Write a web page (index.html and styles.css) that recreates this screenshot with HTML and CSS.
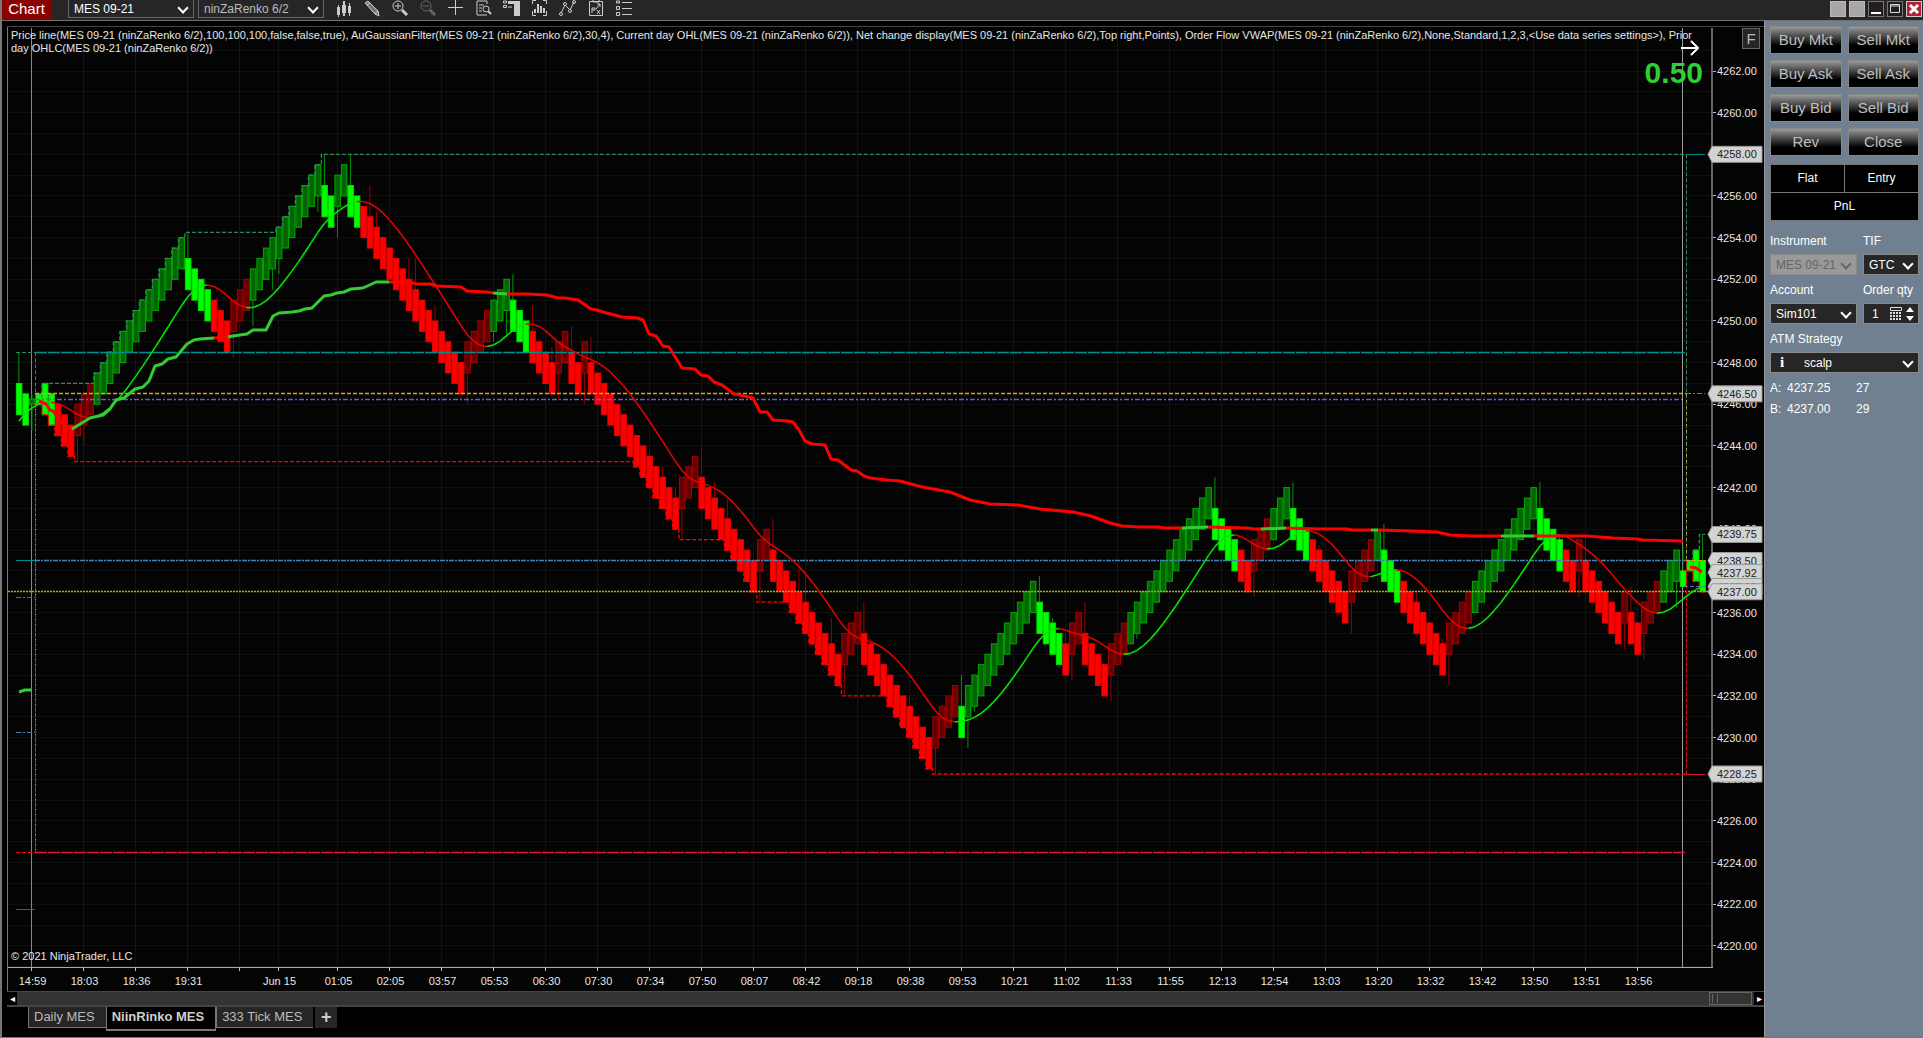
FILE: index.html
```
<!DOCTYPE html>
<html lang="en">
<head>
<meta charset="utf-8">
<title>Chart - MES 09-21</title>
<link rel="stylesheet" href="styles.css">
</head>
<body>
<header class="titlebar">
  <h1 class="brand">Chart</h1>
  <div class="pick pick-bar"><select aria-label="Instrument"><option>MES 09-21</option></select></div>
  <div class="pick pick-bar dim"><select aria-label="Interval"><option>ninZaRenko 6/2</option></select></div>
  <nav class="tools">
    <button aria-label="Bar style"><svg viewBox="0 0 20 20"><path fill="#ccc" d="M3 7h3v8H3zM4 5h1v12H4zM8 5h4v8H8zM9 1h2v15H9zM14 6h3v7h-3zM15 3h1v13h-1z"/></svg></button>
    <button aria-label="Draw"><svg viewBox="0 0 20 20"><path fill="#777" stroke="#ccc" d="M3 3l3-2 10 10-3 3zM13 14l4 2-1-5M5 5l3-2"/></svg></button>
    <button aria-label="Zoom in"><svg viewBox="0 0 20 20"><g fill="none" stroke="#ccc"><circle cx="8" cy="6" r="5"/><path d="M5 6h6M8 3v6"/><path stroke-width="3" d="M12 10l5 5"/></g></svg></button>
    <button aria-label="Zoom out" disabled><svg viewBox="0 0 20 20"><g fill="none" stroke="#666"><circle cx="8" cy="6" r="5"/><path d="M5 6h6"/><path stroke-width="3" d="M12 10l5 5"/></g></svg></button>
    <button aria-label="Crosshair"><svg viewBox="0 0 20 20"><path stroke="#ccc" d="M2 7.500h15M9.500 0v15"/></svg></button>
    <button aria-label="Data box"><svg viewBox="0 0 20 20"><g fill="none" stroke="#ccc"><path d="M13 4V1H3v14h10M5 5h5M5 8h3M5 11h3"/><circle cx="12" cy="9" r="3"/><path stroke-width="2" d="M14 11l3 3"/></g></svg></button>
    <button aria-label="Chart trader"><svg viewBox="0 0 20 20"><path fill="#ccc" d="M6 1h12v15h-6V4H6z"/><path fill="none" stroke="#ccc" d="M1.500 1v2h3V1zM1.500 5.500h3v2h-3zM6 7h4"/></svg></button>
    <button aria-label="Indicators"><svg viewBox="0 0 20 20"><path fill="#ccc" d="M4 9h2v4H4zM7 4h2v9H7zM10 6h2v7h-2zM13 8h2v5h-2z"/><path fill="none" stroke="#ccc" d="M2.500 4V.5H6M13 .5h3.500V4M2.500 11v4.500H6M13 15.500h3.500V11"/></svg></button>
    <button aria-label="Strategies"><svg viewBox="0 0 20 20"><g fill="none" stroke="#ccc"><path d="M3 13l4-8 5 5 4-8"/><circle cx="3" cy="14" r="1.500"/><circle cx="7" cy="4" r="1.500"/><circle cx="12" cy="11" r="1.500"/><circle cx="16" cy="2" r="1.500"/></g></svg></button>
    <button aria-label="Properties"><svg viewBox="0 0 20 20"><g fill="none" stroke="#ccc"><path d="M3.500 1.500h13v14h-13zM7 0v2h6V0M6 13V8h3v2H6M11 4h3v3M14 4l-4 5M11 10l3 4M14 10l-3 4"/></g></svg></button>
    <button aria-label="List"><svg viewBox="0 0 20 20"><g fill="none" stroke="#ccc"><path d="M2.500 1v2h3V1zM2.500 6.500h3v3h-3zM2.500 12.500h3v3h-3zM8 2.500h10M8 8.500h10M8 14.500h10"/></g></svg></button>
  </nav>
  <div class="winbtns">
    <button class="blank" aria-label="Link instrument"></button>
    <button class="blank" aria-label="Link interval"></button>
    <button aria-label="Minimize"><svg viewBox="0 0 14 14"><path stroke="#fff" stroke-width="2" d="M2 11h10"/></svg></button>
    <button aria-label="Maximize"><svg viewBox="0 0 14 14"><path fill="none" stroke="#ddd" d="M2.500 2.500h9v8h-9zM2 4h10"/></svg></button>
    <button class="close" aria-label="Close window"><svg viewBox="0 0 14 14"><path stroke="#fff" stroke-width="3" d="M3 3l8 8M11 3l-8 8"/></svg></button>
  </div>
</header>

<div class="workspace">
  <main class="main">
    <section class="chart">
      <svg id="chart" viewBox="7 27 1757 964" role="img" aria-label="MES 09-21 renko chart"></svg>
      <p class="legend">Price line(MES 09-21 (ninZaRenko 6/2),100,100,100,false,false,true), AuGaussianFilter(MES 09-21 (ninZaRenko 6/2),30,4), Current day OHL(MES 09-21 (ninZaRenko 6/2)), Net change display(MES 09-21 (ninZaRenko 6/2),Top right,Points), Order Flow VWAP(MES 09-21 (ninZaRenko 6/2),None,Standard,1,2,3,&lt;Use data series settings&gt;), Prior day OHLC(MES 09-21 (ninZaRenko 6/2))</p>
      <button class="fixed">F</button>
    </section>
    <div class="scroll">
      <button aria-label="Scroll left">&#9666;</button>
      <div class="track"><div class="thumb"></div></div>
      <button aria-label="Scroll right">&#9656;</button>
    </div>
    <nav class="tabs">
      <a href="#">Daily MES</a>
      <a href="#" class="active">NiinRinko MES</a>
      <a href="#">333 Tick MES</a>
      <button aria-label="Add tab">+</button>
    </nav>
  </main>

  <aside class="trader">
    <div class="orders">
      <button>Buy Mkt</button><button>Sell Mkt</button>
      <button>Buy Ask</button><button>Sell Ask</button>
      <button>Buy Bid</button><button>Sell Bid</button>
      <button>Rev</button><button>Close</button>
    </div>
    <div class="position">
      <div>Flat</div><div>Entry</div>
      <div class="wide">PnL</div>
    </div>
    <form class="fields">
      <div class="field">
        <label for="instr">Instrument</label>
        <div class="pick off"><select id="instr" disabled><option>MES 09-21</option></select></div>
      </div>
      <div class="field">
        <label for="tif">TIF</label>
        <div class="pick"><select id="tif"><option>GTC</option></select></div>
      </div>
      <div class="field">
        <label for="acct">Account</label>
        <div class="pick"><select id="acct"><option>Sim101</option></select></div>
      </div>
      <div class="field">
        <label for="qty">Order qty</label>
        <div class="qty">
          <input id="qty" type="text" value="1">
          <svg viewBox="0 0 24 14"><path fill="none" stroke="#ddd" d="M.5.5h11v3H.5z"/><path stroke="#ddd" stroke-width="2" stroke-dasharray="2 1" d="M0 6h12M0 9h12M0 12h12"/><path fill="#fff" d="M16 5l4-5 4 5zM16 9h8l-4 5z"/></svg>
        </div>
      </div>
      <div class="field wide">
        <label for="atm">ATM Strategy</label>
        <div class="pick atm"><i>i</i><select id="atm"><option>scalp</option></select></div>
      </div>
    </form>
    <table class="quote">
      <tr><td>A:</td><td>4237.25</td><td>27</td></tr>
      <tr><td>B:</td><td>4237.00</td><td>29</td></tr>
    </table>
  </aside>
</div>
<script src="chart.js"></script>
</body>
</html>
```
FILE: styles.css
```
* { box-sizing: border-box; }

body {
  margin: 0;
  min-height: 100vh;
  display: flex;
  flex-direction: column;
  background: #000;
  border-left: 2px solid #777;
  border-bottom: 1px solid #777;
  color: #fff;
  font: 12px/16px "Liberation Sans", Arial, sans-serif;
}

button, select, input { font: inherit; color: inherit; margin: 0; padding: 0; }
button { border: 0; background: none; }

/* title bar */
.titlebar {
  display: flex;
  align-items: flex-start;
  height: 21px;
  background: #262626;
  border-bottom: 1px solid #707070;
}
.brand {
  width: 49px;
  height: 20px;
  margin: 0 17px 0 0;
  background: #8b0000;
  text-align: center;
  font: 15px/17px "Liberation Sans", Arial, sans-serif;
}
.pick { position: relative; }
.pick select {
  display: block;
  width: 100%;
  height: 21px;
  padding: 0 5px;
  appearance: none;
  background: #262626;
  border: 1px solid #8a8a8a;
  border-radius: 0;
  opacity: 1;
}
.pick::after {
  content: "";
  position: absolute;
  right: 7px;
  top: 6px;
  width: 6px;
  height: 6px;
  border: solid #fff;
  border-width: 0 2px 2px 0;
  transform: rotate(45deg);
}
.pick-bar { width: 126px; margin-right: 4px; }
.pick-bar select { height: 18px; border-color: #666; border-top: 0; }
.pick-bar::after { top: 4px; }
.dim select { color: #bbb; }
.tools { display: flex; gap: 8px; margin-left: 6px; }
.tools button, .tools svg { display: block; width: 20px; height: 20px; }
.winbtns { display: flex; gap: 3px; margin: 1px 1px 0 auto; }
.winbtns button { width: 16px; height: 16px; background: #231f20; border: 1px solid #777; }
.winbtns svg { display: block; width: 14px; height: 14px; }
.winbtns .blank { background: #aaa6a8; border-color: #bbb; }
.winbtns .close { background: #b22234; border-color: #ccc; }

/* chart */
.workspace { flex: 1; display: flex; }
.main { flex: 1; min-width: 0; padding: 5px 0 0 5px; }
.chart { position: relative; border-top: 1px solid #444; background: #040404; }
.chart svg { display: block; width: 100%; height: auto; }
.chart text { font-family: "Liberation Sans", Arial, sans-serif; font-size: 11px; fill: #e6e6e6; }
.chart .net { font-size: 30px; font-weight: bold; fill: #32cd32; }
.chart .tagtext { fill: #222; }
.legend {
  position: absolute;
  top: 2px;
  left: 4px;
  right: 56px;
  margin: 0;
  color: #e6e6e6;
  font-size: 11px;
  line-height: 13px;
}
.fixed {
  position: absolute;
  top: 1px;
  right: 4px;
  width: 18px;
  height: 21px;
  background: #262626;
  border: 1px solid #666;
  color: #bbb;
  font-size: 15px;
}
.scroll {
  display: flex;
  height: 16px;
  background: #333;
  border-top: 1px solid #1c4f82;
  border-bottom: 2px solid #444;
}
.scroll button { width: 10px; background: #000; font-size: 10px; line-height: 12px; }
.track { flex: 1; display: flex; justify-content: flex-end; }
.thumb { width: 43px; margin-right: 2px; border: 1px solid #666; background: #333; }
.thumb::before { content: ""; display: block; width: 4px; height: 9px; margin: 1px 2px; border: solid #666; border-width: 0 1px; }
.tabs { display: flex; align-items: flex-start; padding-left: 21px; font-size: 13px; }
.tabs a {
  height: 21px;
  padding: 0 11px 0 5px;
  background: #262626;
  border: solid #777;
  border-width: 0 0 1px 1px;
  color: #bbb;
  line-height: 19px;
  text-decoration: none;
}
.tabs .active { height: 24px; background: #000; border-width: 0 1px 2px 1px; color: #d0d0d0; font-weight: bold; }
.tabs button { width: 22px; height: 21px; margin-left: 2px; background: #262626; color: #ccc; font-size: 18px; font-weight: bold; line-height: 19px; }

/* order entry */
.trader { width: 159px; padding: 5px 4px 0 5px; background: #708090; border-left: 1px solid #999; }
.orders { display: grid; grid-template-columns: 1fr 1fr; gap: 6px; }
.orders button {
  height: 28px;
  background: linear-gradient(#999, #000 70%);
  border: 1px solid #888;
  color: #bdbdbd;
  font-size: 15px;
  line-height: 24px;
}
.position {
  display: grid;
  grid-template-columns: 1fr 1fr;
  gap: 1px;
  margin: 8px 0 12px;
  background: #777;
  border: 1px solid #777;
}
.position div { height: 27px; background: #000; line-height: 26px; text-align: center; }
.position .wide, .fields .wide { grid-column: 1 / -1; }
.fields { display: grid; grid-template-columns: 87px 1fr; gap: 7px 6px; }
.field label { display: block; margin-bottom: 5px; }
.fields .off select { background: #999; color: #666; }
.off::after { border-color: #666; }
.atm i { position: absolute; left: 10px; top: 2px; font: bold 15px/16px "Liberation Serif", serif; }
.atm select { padding-left: 33px; }
.qty { display: flex; align-items: center; height: 21px; background: #262626; border: 1px solid #8a8a8a; }
.qty input { width: 26px; background: none; border: 0; padding-left: 8px; }
.qty svg { width: 24px; height: 14px; }
.quote { margin-top: 5px; border-collapse: collapse; line-height: 21px; }
.quote td { padding: 0; }
.quote td:first-child { width: 17px; }
.quote td:nth-child(2) { width: 69px; }
```
FILE: chart.js
```
var svg = document.getElementById('chart');
var out = [];

function X(i) { return 18.9 + i * 6.5; }
function Y(p) { return 71 + (4262 - p) * 20.83; }
function line(x1, y1, x2, y2, color, dash, w) {
  // keep level lines crisp
  if (y1 == y2) y1 = y2 = Math.floor(y1) + 0.5;
  out.push('<path d="M' + x1 + ' ' + y1 + 'L' + x2 + ' ' + y2 + '" fill="none" stroke="' + color +
    '" stroke-width="' + (w || 1) + '" stroke-dasharray="' + (dash || 'none') + '"/>');
}
function poly(pts, color, w) {
  out.push('<polyline points="' + pts + '" fill="none" stroke="' + color + '" stroke-width="' + w + '" stroke-linejoin="round"/>');
}
function text(x, y, s, anchor, cls) {
  out.push('<text x="' + x + '" y="' + y + '" text-anchor="' + (anchor || 'start') + '" class="' + (cls || '') + '">' + s + '</text>');
}

// L/R = falling bar (green/red trend), G/D = rising bar
var runs = 'L2 R3 D3 G14 L4 R3 D3 G11 L2 G2 L2 R16 D4 G3 L3 R4 D2 R2 D1 R14 D3 R9 D2 R11 D3 R11 D4 L1 G11 L4 R1 D2 R4 D3 ' +
  'G13 L4 R2 D3 G3 L3 R6 D4 G1 L3 R7 D4 G10 L4 R2 D1 R6 D1 R2 D3 G3';
// wick lengths in ticks
var hi = {0:6,2:1,26:5,47:6,51:6,54:6,55:3,60:4,61:6,64:3,76:5,79:5,82:3,85:5,88:5,97:1,99:2,101:2,105:6,107:3,109:4,116:6,
  120:6,121:6,125:5,130:6,131:1,137:2,145:6,157:5,159:1,161:2,164:6,184:6,196:5,200:1,210:5,215:2,219:1,234:5,237:1,241:4,248:5,256:5,259:5};
var lo = {2:5,9:5,10:4,33:5,36:5,39:4,40:3,46:3,49:6,69:6,73:2,75:5,83:5,87:6,102:6,114:6,127:6,141:5,146:6,147:1,162:5,
  168:5,172:1,190:5,205:6,220:6,240:5,247:5,250:5,255:5};
var bars = [
  {k:'L', b:4245.5, t:4247}, {k:'L', b:4245, t:4246.5}, {k:'G', b:4246, t:4246.25}, {k:'L', b:4246, t:4246.5}
];
var low = 4246, dir = -1;
runs.split(' ').forEach(function (r) {
  var k = r[0], n = +r.slice(1), d = (k == 'G' || k == 'D') ? 1 : -1;
  for (var j = 0; j < n; j++) {
    // the first block sits half a point under the opening bar
    low += d * (d == dir ? 0.5 : 1);
    dir = d;
    bars.push({k: k, b: low, t: low + 1.5});
  }
});
bars.push({k:'L', b:4237.25, t:4238}, {k:'L', b:4238, t:4238.5}, {k:'L', b:4237.5, t:4239}, {k:'L', b:4237, t:4238.5});

// grid
var p, i, x;
for (p = 4263; p >= 4219; p--) line(8, Y(p), 1711, Y(p), '#0f0f0f');
var times = ['14:59', '18:03', '18:36', '19:31', '', 'Jun 15', '01:05', '02:05', '03:57', '05:53', '06:30', '07:30', '07:34', '07:50',
  '08:07', '08:42', '09:18', '09:38', '09:53', '10:21', '11:02', '11:33', '11:55', '12:13', '12:54', '13:03', '13:20', '13:32',
  '13:42', '13:50', '13:51', '13:56'];
times.forEach(function (t, n) {
  x = n < 5 ? 31.5 + n * 52 : n == 5 ? 278.5 : 337.5 + (n - 6) * 52;
  line(x, 28, x, 967, '#131313');
  line(x, 968, x, 971, '#bbb');
  text(x + 1, 985, t, 'middle');
});
line(31.5, 28, 31.5, 967, '#888');
line(1682.5, 28, 1682.5, 967, '#999');

// bars
var fill = {L: '#00ff00', R: '#ff0000', G: '#046404', D: '#640000'};
var edge = {L: '#00e000', R: '#e80000', G: '#00aa00', D: '#a80000'};
bars.forEach(function (b, i) {
  b.h = b.t + (hi[i] || 0) / 4;
  b.l = b.b - (lo[i] || 0) / 4;
  var wick = (b.k == 'L' || b.k == 'G') ? '#009600' : '#960000';
  if (b.h > b.t) line(X(i), Y(b.h), X(i), Y(b.t), wick);
  if (b.l < b.b) line(X(i), Y(b.b), X(i), Y(b.l), wick);
  out.push('<rect x="' + (X(i) - 2.5) + '" y="' + Y(b.t) + '" width="5.500" height="' + (Y(b.b) - Y(b.t)) +
    '" fill="' + fill[b.k] + '" stroke="' + edge[b.k] + '"/>');
});

// session high and low, stepping with the bars
function steps(from, to, key, pick, color, end) {
  var v = bars[from][key], d = 'M' + (X(from) - 3) + ' ' + Y(v);
  for (var i = from + 1; i <= to; i++) {
    var n = pick(v, bars[i][key]);
    if (n != v) d += 'H' + (X(i) - 3) + 'V' + Y(n);
    v = n;
  }
  out.push('<path d="' + d + 'H' + end + '" fill="none" stroke="' + color + '" stroke-width="1.300" stroke-dasharray="4 2"/>');
}
steps(3, 256, 'h', Math.max, '#2e8b57', 1686);
steps(3, 256, 'l', Math.min, '#ff0000', 1686);
steps(257, 259, 'h', Math.max, '#2e8b57', 1705);
steps(257, 259, 'l', Math.min, '#ff0000', 1705);

// price levels
line(16, Y(4248.5), 35, Y(4248.5), '#2e8b57', '4 2');
line(35, Y(4248.5), 1686, Y(4248.5), '#009090', '12 1', 1.3);
line(35.5, Y(4248.5), 35.5, Y(4246.5), '#2e8b57', '4 2');
line(35.5, Y(4246.5), 35.5, Y(4224.5), '#ff0000', '4 1');
line(35.5, Y(4246.5), 35.5, Y(4224.5), '#daa520', '1 4');
line(16, Y(4224.5), 35, Y(4224.5), '#ff0000', '4 2');
line(35, Y(4224.5), 1686, Y(4224.5), '#dc143c', '12 1', 1.3);
line(35, Y(4246.5), 1686, Y(4246.5), '#daa520', '4 2', 1.3);
line(35, Y(4246.25), 1682, Y(4246.25), '#6a5acd', '5 2 2 2', 1.3);
line(16, Y(4238.5), 35, Y(4238.5), '#008b8b');
line(35, Y(4238.5), 1686, Y(4238.5), '#4682b4', '5 1 2 1', 1.3);
line(8, Y(4237), 1711, Y(4237), '#b0b000', '2 1', 1.3);
line(16, 597, 35, 597, '#6a5acd', '5 2 2 2');
line(16, 732, 35, 732, '#4682b4', '5 2 2 2');
line(16, 909, 35, 909, '#dc143c');
line(1686.5, Y(4258), 1686.5, Y(4238.5), '#2e8b57', '4 2');
line(1686.5, Y(4246.5), 1686.5, Y(4238.5), '#daa520', '2 4');
line(1686.5, Y(4238.5), 1686.5, Y(4228.25), '#ff0000', '4 2');
line(1686, Y(4258), 1705, Y(4258), '#008b8b');
line(1686, Y(4246.5), 1705, Y(4246.5), '#4682b4', '5 2 2 2');
line(1686, Y(4228.25), 1705, Y(4228.25), '#dc143c');
line(1686, Y(4238.5), 1705, Y(4238.5), '#daa520', '4 2');
line(1684, Y(4237.25), 1705, Y(4237.25), '#6a5acd', '4 2');

// gaussian filter: four smoothing passes over the close
var g = [4247, 4246.6, 4246, 4245.2], a = 0.3788, prev = 4245, px = X(0), py = Y(4245.2);
bars.forEach(function (b, i) {
  if (i == 0) return;
  var v = (b.k == 'G' || b.k == 'D') ? b.t : b.b;
  for (var n = 0; n < 4; n++) { g[n] += a * (v - g[n]); v = g[n]; }
  poly([px, py, X(i), Y(v)], v >= prev ? '#00e600' : '#e60000', 1.6);
  prev = v; px = X(i); py = Y(v);
});

// volume weighted price
var vwap = [
  ['r', '39,401 46,404 50,410 53,411 60,420 66,428 72,429'],
  ['g', '72,429 90,418 103,415 110,409 116,400 124,398 135,389 143,387 149,381 155,366 162,364 168,359 176,357 187,344 194,340 200,339 214,338'],
  ['r', '214,338 228,337'],
  ['g', '228,337 233,336 247,334 253,330 266,330 273,316 279,313 292,312 299,311 305,309 312,308 324,296 331,295 337,293 344,292 351,289 363,288 376,282 389,282'],
  ['r', '389,282 409,282 417,284 430,284 437,286 461,287 467,291 487,292 493,293'],
  ['g', '493,293 507,294'],
  ['r', '507,294 527,294 547,295 558,298 565,298 578,300 591,309 597,310 603,312 622,317 637,318 643,320 649,334 656,336 663,346 669,347 682,368 695,369 701,375 708,376 714,382 722,385 734,394 740,395 753,398 760,412 767,412 773,420 787,421 793,422 799,430 805,441 812,444 825,445 831,459 838,460 851,470 857,471 864,476 870,478 887,480 900,481 922,487 950,492 970,500 990,504 1018,505 1040,509 1073,512 1091,516 1110,523 1122,526 1140,527 1157,527 1165,528 1182,528'],
  ['g', '1182,528 1208,527'],
  ['r', '1208,527 1247,528 1253,529 1261,529'],
  ['g', '1261,529 1286,528'],
  ['r', '1286,528 1320,529 1347,529 1352,530 1371,530'],
  ['g', '1371,530 1378,530'],
  ['r', '1378,530 1410,531 1437,532 1450,535 1470,536 1501,536'],
  ['g', '1501,536 1534,536'],
  ['r', '1534,536 1587,536 1613,538 1637,539 1643,540 1683,541'],
  ['r', '1690,567 1696,568 1702,572'],
  ['g', '19,692 25,690 32,690']
];
vwap.forEach(function (s) { poly(s[1], s[0] == 'r' ? '#ff0000' : '#32cd32', 3); });

// axes
line(7.5, 27, 7.5, 991, '#777');
line(1712, 28, 1712, 968, '#666', '', 2);
line(8, 967.5, 1713, 967.5, '#aaa');
for (p = 4262; p >= 4220; p -= 2) {
  line(1713, Y(p), 1716, Y(p), '#bbb');
  text(1717, Y(p) + 4, p + '.00');
}
[4258, 4246.5, 4239.75, 4238.5, 4237.92, 4237.25, 4237, 4228.25].forEach(function (p) {
  var y = Y(p);
  out.push('<path d="M1708 ' + y + 'l4 -8h50v16h-50z" fill="#d3d3d3" stroke="#999" stroke-width="1"/>');
  text(1717, y + 4, p.toFixed(2), 'start', 'tagtext');
});

text(11, 960, '© 2021 NinjaTrader, LLC');
text(1703, 83, '0.50', 'end', 'net');
poly('1681,48 1698,48', '#fff', 2);
poly('1691,41 1698,48 1691,55', '#fff', 2);

svg.innerHTML = out.join('');
```
